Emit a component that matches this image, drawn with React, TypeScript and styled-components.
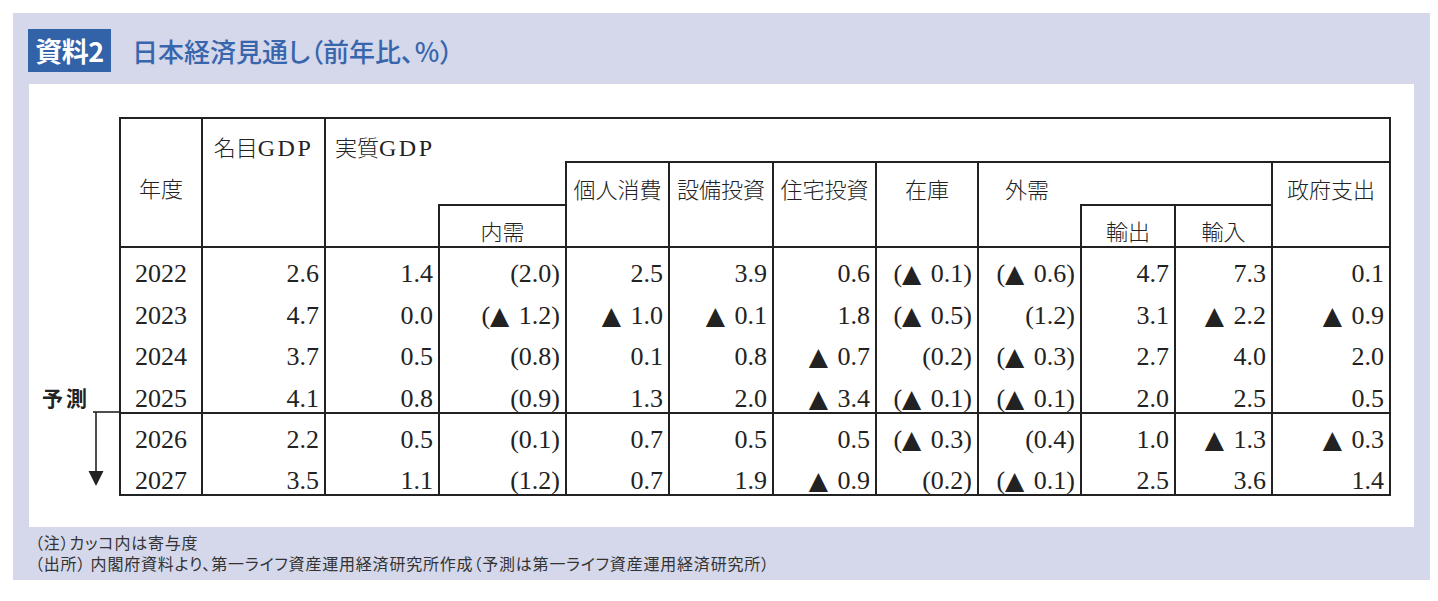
import React from "react";
import styled, { createGlobalStyle } from "styled-components";

const GlobalStyle = createGlobalStyle`
  html, body { margin: 0; padding: 0; background: #ffffff; }
  body { font-family: "Noto Sans CJK JP", "Noto Sans", sans-serif; }
`;

const Panel = styled.div`
  margin: 13px 0 0 13px;
  width: 1417px;
  height: 567px;
  background: #d5d8ea;
  display: flex;
  flex-direction: column;
`;

const TitleBar = styled.div`
  height: 71px;
  box-sizing: border-box;
  padding: 16px 0 0 15px;
  display: flex;
  align-items: flex-start;
`;

const Badge = styled.div`
  width: 83px;
  height: 43px;
  background: #3262a8;
  color: #ffffff;
  display: flex;
  align-items: center;
  justify-content: center;
  font-family: "Noto Sans CJK JP", sans-serif;
  font-weight: 700;
  font-size: 27px;
  letter-spacing: -0.5px;
`;

const Title = styled.div`
  height: 43px;
  margin-left: 21px;
  display: flex;
  align-items: center;
  color: #3866ad;
  font-family: "Noto Sans CJK JP", sans-serif;
  font-weight: 500;
  font-size: 26px;
  font-feature-settings: "palt";
`;

const Sheet = styled.div`
  margin: 0 16px;
  height: 443px;
  background: #ffffff;
  box-sizing: border-box;
  padding-top: 33px;
  display: flex;
  align-items: flex-start;
`;

const Gutter = styled.div`
  width: 90px;
  padding-top: 268px;
  display: flex;
  flex-direction: column;
`;

const ForecastLabel = styled.div`
  margin-left: 13px;
  height: 24px;
  line-height: 24px;
  font-family: "Noto Sans CJK JP", sans-serif;
  font-weight: 700;
  font-size: 21px;
  letter-spacing: 3px;
  color: #222222;
`;

const ArrowSvg = styled.svg`
  display: block;
  margin-top: 1px;
`;

const Table = styled.div`
  display: grid;
  grid-template-columns: 80px 123px 114px 127px 103px 104px 103px 102px 103px 94px 97px 118px;
  grid-template-rows: 42px 43px 42px repeat(4, 41.5px) repeat(2, 41px);
  border: 2px solid #222222;
  color: #222222;
  font-family: "Liberation Serif", "Noto Sans CJK JP", serif;
`;

type CellProps = {
  $c: string;
  $r: string;
  $bt?: boolean;
  $bl?: boolean;
  $align?: "left" | "center" | "right";
  $pt?: number;
  $pl?: number;
};

const HeadCell = styled.div<CellProps>`
  grid-column: ${(p) => p.$c};
  grid-row: ${(p) => p.$r};
  border-top: ${(p) => (p.$bt ? "2px solid #222222" : "none")};
  border-left: ${(p) => (p.$bl ? "2px solid #222222" : "none")};
  box-sizing: border-box;
  padding-top: ${(p) => p.$pt ?? 0}px;
  padding-left: ${(p) => p.$pl ?? 0}px;
  text-align: ${(p) => p.$align ?? "center"};
  font-size: 22px;
  line-height: 22px;
  font-weight: 300;
  white-space: nowrap;
  overflow: hidden;
`;

const Latin = styled.span`
  font-family: "Liberation Serif", serif;
  font-size: 24px;
  letter-spacing: 2.5px;
  font-weight: 400;
`;

const DataCell = styled.div<{ $bt?: boolean; $bl?: boolean; $center?: boolean }>`
  border-top: ${(p) => (p.$bt ? "2px solid #222222" : "none")};
  border-left: ${(p) => (p.$bl ? "2px solid #222222" : "none")};
  box-sizing: border-box;
  padding-top: ${(p) => (p.$bt ? 13 : 15)}px;
  padding-right: ${(p) => (p.$center ? 0 : 5)}px;
  text-align: ${(p) => (p.$center ? "center" : "right")};
  font-size: 26px;
  line-height: 26px;
  white-space: nowrap;
`;

const Tri = styled.span`
  font-family: "DejaVu Sans", sans-serif;
  font-size: 25px;
  margin-right: 3px;
`;

const Notes = styled.div`
  padding: 5px 0 0 22px;
  font-family: "Noto Sans CJK JP", sans-serif;
  font-feature-settings: "palt";
  letter-spacing: 0.8px;
  font-size: 16px;
  line-height: 21px;
  color: #333333;
`;

const Note = styled.div`
  white-space: nowrap;
`;

const years = ["2022", "2023", "2024", "2025", "2026", "2027"];

const data: string[][] = [
  ["2.6", "1.4", "(2.0)", "2.5", "3.9", "0.6", "(▲ 0.1)", "(▲ 0.6)", "4.7", "7.3", "0.1"],
  ["4.7", "0.0", "(▲ 1.2)", "▲ 1.0", "▲ 0.1", "1.8", "(▲ 0.5)", "(1.2)", "3.1", "▲ 2.2", "▲ 0.9"],
  ["3.7", "0.5", "(0.8)", "0.1", "0.8", "▲ 0.7", "(0.2)", "(▲ 0.3)", "2.7", "4.0", "2.0"],
  ["4.1", "0.8", "(0.9)", "1.3", "2.0", "▲ 3.4", "(▲ 0.1)", "(▲ 0.1)", "2.0", "2.5", "0.5"],
  ["2.2", "0.5", "(0.1)", "0.7", "0.5", "0.5", "(▲ 0.3)", "(0.4)", "1.0", "▲ 1.3", "▲ 0.3"],
  ["3.5", "1.1", "(1.2)", "0.7", "1.9", "▲ 0.9", "(0.2)", "(▲ 0.1)", "2.5", "3.6", "1.4"],
];

function Value({ text }: { text: string }) {
  const idx = text.indexOf("▲");
  if (idx < 0) return <>{text}</>;
  return (
    <>
      {text.slice(0, idx)}
      <Tri>▲</Tri>
      {text.slice(idx + 1)}
    </>
  );
}

export default function App() {
  return (
    <>
      <GlobalStyle />
      <Panel>
        <TitleBar>
          <Badge>資料2</Badge>
          <Title>日本経済見通し（前年比、％）</Title>
        </TitleBar>
        <Sheet>
          <Gutter>
            <ForecastLabel>予測</ForecastLabel>
            <ArrowSvg width="90" height="78" viewBox="0 0 90 78">
              <line x1="64" y1="2" x2="90" y2="2" stroke="#222" strokeWidth="1.6" />
              <line x1="67" y1="2" x2="67" y2="62" stroke="#222" strokeWidth="1.6" />
              <polygon points="59.5,61 74.5,61 67,76" fill="#222" />
            </ArrowSvg>
          </Gutter>
          <Table>
            <HeadCell $c="1 / 2" $r="1 / 4" $pt={60}>年度</HeadCell>
            <HeadCell $c="2 / 3" $r="1 / 4" $bl $pt={18}>
              名目<Latin>GDP</Latin>
            </HeadCell>
            <HeadCell $c="3 / 13" $r="1 / 2" $bl $pt={18} $pl={9} $align="left">
              実質<Latin>GDP</Latin>
            </HeadCell>
            <HeadCell $c="3 / 4" $r="2 / 4" $bl />
            <HeadCell $c="4 / 5" $r="2 / 3" />
            <HeadCell $c="4 / 5" $r="3 / 4" $bl $bt $pt={16}>内需</HeadCell>
            <HeadCell $c="5 / 6" $r="2 / 4" $bl $bt $pt={17}>個人消費</HeadCell>
            <HeadCell $c="6 / 7" $r="2 / 4" $bl $bt $pt={17}>設備投資</HeadCell>
            <HeadCell $c="7 / 8" $r="2 / 4" $bl $bt $pt={17}>住宅投資</HeadCell>
            <HeadCell $c="8 / 9" $r="2 / 4" $bl $bt $pt={17}>在庫</HeadCell>
            <HeadCell $c="9 / 12" $r="2 / 3" $bl $bt $pt={17} $pl={26} $align="left">外需</HeadCell>
            <HeadCell $c="9 / 10" $r="3 / 4" $bl />
            <HeadCell $c="10 / 11" $r="3 / 4" $bl $bt $pt={16}>輸出</HeadCell>
            <HeadCell $c="11 / 12" $r="3 / 4" $bl $bt $pt={16}>輸入</HeadCell>
            <HeadCell $c="12 / 13" $r="2 / 4" $bl $bt $pt={17}>政府支出</HeadCell>
            {years.map((y, ri) => {
              const bt = ri === 0 || ri === 4;
              return (
                <React.Fragment key={y}>
                  <DataCell $bt={bt} $center>{y}</DataCell>
                  {data[ri].map((v, ci) => (
                    <DataCell key={ci} $bt={bt} $bl>
                      <Value text={v} />
                    </DataCell>
                  ))}
                </React.Fragment>
              );
            })}
          </Table>
        </Sheet>
        <Notes>
          <Note>（注）カッコ内は寄与度</Note>
          <Note>（出所） 内閣府資料より、第一ライフ資産運用経済研究所作成（予測は第一ライフ資産運用経済研究所）</Note>
        </Notes>
      </Panel>
    </>
  );
}
